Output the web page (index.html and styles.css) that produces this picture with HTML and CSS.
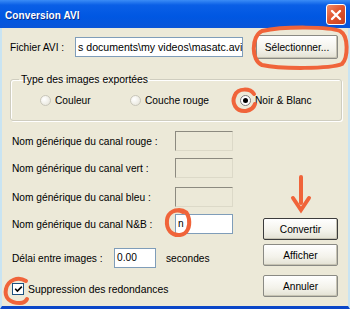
FILE: index.html
```html
<!DOCTYPE html>
<html lang="fr">
<head>
    <meta charset="UTF-8">
    <title>Conversion AVI</title>
    <link rel="stylesheet" href="styles.css">
</head>
<body>
    <div class="dialog">
        <div class="titlebar">
            <span class="title">Conversion AVI</span>
            <span class="close-btn">
                <svg width="14" height="14" viewBox="0 0 14 14"><path d="M3 3 L11 11 M11 3 L3 11" stroke="#fff" stroke-width="2.4" stroke-linecap="round"/></svg>
            </span>
        </div>

        <div class="content">
            <div class="file-row">
                <span class="file-label">Fichier AVI :</span>
                <div class="textbox file-input">s documents\my videos\masatc.avi</div>
                <button class="xp-button select-button">Sélectionner...</button>
            </div>

            <fieldset class="group">
                <legend>Type des images exportées</legend>
                <div class="radios">
                    <label class="radio-item couleur"><span class="radio"></span>Couleur</label>
                    <label class="radio-item rouge"><span class="radio"></span>Couche rouge</label>
                    <label class="radio-item"><span class="radio checked"></span>Noir &amp; Blanc</label>
                </div>
            </fieldset>

            <div class="lower">
                <div class="fields">
                    <div class="field-row r-rouge">
                        <span class="field-label">Nom générique du canal rouge :</span>
                        <div class="textbox disabled"></div>
                    </div>
                    <div class="field-row r-vert">
                        <span class="field-label">Nom générique du canal vert :</span>
                        <div class="textbox disabled"></div>
                    </div>
                    <div class="field-row r-bleu">
                        <span class="field-label">Nom générique du canal bleu :</span>
                        <div class="textbox disabled"></div>
                    </div>
                    <div class="field-row r-nb">
                        <span class="field-label">Nom générique du canal N&amp;B :</span>
                        <div class="textbox">n</div>
                    </div>
                    <div class="field-row r-delai">
                        <span class="delai-label">Délai entre images :</span>
                        <div class="textbox delai-input">0.00</div>
                        <span class="unit">secondes</span>
                    </div>
                    <div class="field-row r-check">
                        <span class="checkbox">
                            <svg width="9" height="9" viewBox="0 0 9 9"><path d="M1 4 L3.5 6.5 L8 1.5" stroke="#21a121" stroke-width="0" fill="none"/><path d="M1.2 3.8 L3.4 6 L7.8 1.6" stroke="#000" stroke-width="1.6" fill="none"/></svg>
                        </span>
                        <span class="check-label">Suppression des redondances</span>
                    </div>
                </div>

                <div class="buttons">
                    <button class="xp-button default convertir">Convertir</button>
                    <button class="xp-button afficher">Afficher</button>
                    <button class="xp-button annuler">Annuler</button>
                </div>
            </div>
        </div>

        <!-- annotations au feutre orange -->
        <svg class="marks" width="350" height="309" viewBox="0 0 350 309">
            <g fill="none" stroke="#f0643a" stroke-width="4" stroke-linecap="round">
                <path d="M262 31 C285 26 330 27 340 31 C349 36 348 58 342 64 C330 69 280 69 262 65 C251 61 251 36 262 31 Z"/>
                <path d="M254 94 C250 88 238 88 235 95 C231 103 236 112 246 111 C251 110 254 107 255 104"/>
                <path d="M301 177 L301 203"/>
                <path d="M293 198 L301 210 L309 198"/>
                <path d="M183 212 C176 208 168 212 167 220 C166 230 172 236 180 235 C188 234 190 226 189 219 C188 213 184 210 179 210"/>
                <path d="M26 281 C18 276 8 280 6 289 C4 298 10 303 20 303 C24 303 26 301 27 299"/>
            </g>
        </svg>
    </div>
</body>
</html>
```

FILE: styles.css
```css
* {
    margin: 0;
    padding: 0;
    box-sizing: border-box;
}

body {
    font-family: 'Liberation Sans', Arial, sans-serif;
    font-size: 10.2px;
    color: #000;
    background: #ece9d8;
}

.dialog {
    position: relative;
    width: 350px;
    height: 309px;
    background: #ece9d8;
    border-left: 2px solid #c9e4f2;
    border-right: 2px solid #c9e4f2;
    border-bottom: 3px solid #0a46c8;
    display: flex;
    flex-direction: column;
}

.titlebar {
    height: 28px;
    margin: 0 -2px;
    background: linear-gradient(#3b8cf6 0%, #0a5fe6 18%, #0057e2 60%, #0a55d8 100%);
    display: flex;
    align-items: center;
    justify-content: space-between;
    padding: 0 4px 0 5px;
}

.title {
    color: #fff;
    font-weight: bold;
    font-size: 10px;
    letter-spacing: 0.1px;
    text-shadow: 1px 1px 0 #0a2f8a;
    margin-top: 2px;
}

.close-btn {
    width: 20px;
    height: 21px;
    margin-top: 1px;
    border: 1px solid #fff;
    border-radius: 3px;
    background: linear-gradient(135deg, #f08b6a, #e0522b 50%, #c9401f);
    display: flex;
    align-items: center;
    justify-content: center;
}

.content {
    padding: 8px 8px 0 8px;
    flex: 1;
}

/* ligne fichier */
.file-row {
    display: flex;
    align-items: center;
    height: 22px;
}

.file-label {
    width: 65px;
}

.textbox {
    height: 20px;
    background: #fff;
    border: 1px solid #7f9db9;
    padding: 0 2px;
    line-height: 18px;
    white-space: nowrap;
    overflow: hidden;
}

.textbox.disabled {
    background: #ece9d8;
    border-top: 1px solid #8c8a80;
    border-left: 1px solid #8c8a80;
    border-right: 1px solid #dcd9c8;
    border-bottom: 1px solid #dcd9c8;
}

.file-input {
    width: 168px;
    font-size: 10.6px;
}

.xp-button {
    font-family: inherit;
    font-size: inherit;
    color: #000;
    background: linear-gradient(#ffffff, #f3f2ea 60%, #e3e1d3);
    border: 1px solid #8a8a84;
    border-radius: 2px;
    box-shadow: inset -1px -1px 0 #c6c3b3;
    height: 22px;
    width: 75px;
}

.xp-button.default {
    border-color: #3c3c3c;
}

.select-button {
    width: 82px;
    height: 24px;
    margin-left: auto;
    margin-right: 2px;
}

/* groupe radio */
.group {
    margin-top: 16px;
    width: 332px;
    height: 47px;
    border: 1px solid #cfcdbf;
    border-radius: 3px;
    box-shadow: 1px 1px 0 #fff inset, 1px 1px 0 #fff;
}

.group legend {
    margin-left: 8px;
    padding: 0 2px;
    font-size: 10.4px;
}

.radios {
    display: flex;
    align-items: center;
    padding: 10px 0 0 29px;
}

.radio-item {
    display: flex;
    align-items: center;
    gap: 4px;
}

.radio-item.couleur {
    width: 90px;
}

.radio-item.rouge {
    width: 110px;
}

.radio {
    width: 11px;
    height: 11px;
    border-radius: 50%;
    background: radial-gradient(circle at 35% 35%, #ffffff, #e4e2d6);
    border: 1px solid #c8c6ba;
    display: flex;
    align-items: center;
    justify-content: center;
}

.radio.checked {
    border-color: #7a7a7a;
    background: #fff;
}

.radio.checked::after {
    content: '';
    width: 5px;
    height: 5px;
    border-radius: 50%;
    background: #000;
}

/* zone du bas */
.lower {
    display: flex;
    justify-content: space-between;
    padding-right: 2px;
}

.fields {
    display: flex;
    flex-direction: column;
}

.field-row {
    display: flex;
    align-items: center;
    height: 20px;
    padding-left: 2px;
}

.field-row .textbox {
    width: 58px;
}

.field-label {
    width: 163px;
}

.r-rouge { margin-top: 10px; }
.r-vert { margin-top: 7px; }
.r-bleu { margin-top: 9px; }
.r-nb { margin-top: 7px; }
.r-delai { margin-top: 14px; }
.r-check { margin-top: 11px; }

.delai-label {
    width: 102px;
}

.field-row .delai-input {
    width: 42px;
}

.unit {
    margin-left: 10px;
}

.checkbox {
    width: 12px;
    height: 12px;
    background: #fff;
    border: 1px solid #1c5180;
    display: flex;
    align-items: center;
    justify-content: center;
    margin-right: 4px;
}

.check-label {
    font-size: 10.4px;
}

.buttons {
    display: flex;
    flex-direction: column;
}

.convertir { margin-top: 97px; }
.afficher { margin-top: 4px; }
.annuler { margin-top: 9px; }

.marks {
    position: absolute;
    top: 0;
    left: -2px;
    pointer-events: none;
}
```
